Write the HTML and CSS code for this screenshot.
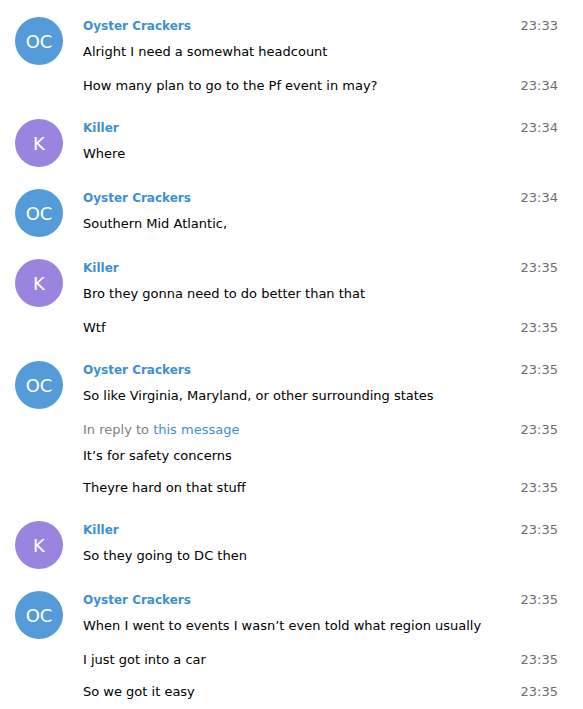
FILE: index.html
```html
<!DOCTYPE html>
<html lang="en">
<head>
    <meta charset="UTF-8">
    <title>Chat</title>
    <link rel="stylesheet" href="styles.css">
</head>
<body>
    <div class="chat">
        <div class="group">
            <div class="avatar oc">OC</div>
            <div class="body">
                <div class="line name-line"><span class="name">Oyster Crackers</span><span class="time">23:33</span></div>
                <div class="line msg"><span class="text">Alright I need a somewhat headcount</span></div>
                <div class="line msg"><span class="text">How many plan to go to the Pf event in may?</span><span class="time">23:34</span></div>
            </div>
        </div>

        <div class="group">
            <div class="avatar k">K</div>
            <div class="body">
                <div class="line name-line"><span class="name">Killer</span><span class="time">23:34</span></div>
                <div class="line msg"><span class="text">Where</span></div>
            </div>
        </div>

        <div class="group">
            <div class="avatar oc">OC</div>
            <div class="body">
                <div class="line name-line"><span class="name">Oyster Crackers</span><span class="time">23:34</span></div>
                <div class="line msg"><span class="text">Southern Mid Atlantic,</span></div>
            </div>
        </div>

        <div class="group">
            <div class="avatar k">K</div>
            <div class="body">
                <div class="line name-line"><span class="name">Killer</span><span class="time">23:35</span></div>
                <div class="line msg"><span class="text">Bro they gonna need to do better than that</span></div>
                <div class="line msg"><span class="text">Wtf</span><span class="time">23:35</span></div>
            </div>
        </div>

        <div class="group">
            <div class="avatar oc">OC</div>
            <div class="body">
                <div class="line name-line"><span class="name">Oyster Crackers</span><span class="time">23:35</span></div>
                <div class="line msg"><span class="text">So like Virginia, Maryland, or other surrounding states</span></div>
                <div class="msg reply-msg">
                    <div class="line reply"><span class="text">In reply to <a href="#">this message</a></span><span class="time">23:35</span></div>
                    <div class="line"><span class="text">It’s for safety concerns</span></div>
                </div>
                <div class="line msg"><span class="text">Theyre hard on that stuff</span><span class="time">23:35</span></div>
            </div>
        </div>

        <div class="group">
            <div class="avatar k">K</div>
            <div class="body">
                <div class="line name-line"><span class="name">Killer</span><span class="time">23:35</span></div>
                <div class="line msg"><span class="text">So they going to DC then</span></div>
            </div>
        </div>

        <div class="group">
            <div class="avatar oc">OC</div>
            <div class="body">
                <div class="line name-line"><span class="name">Oyster Crackers</span><span class="time">23:35</span></div>
                <div class="line msg"><span class="text">When I went to events I wasn’t even told what region usually</span></div>
                <div class="line msg"><span class="text">I just got into a car</span><span class="time">23:35</span></div>
                <div class="line msg last"><span class="text">So we got it easy</span><span class="time">23:35</span></div>
            </div>
        </div>
    </div>
</body>
</html>
```

FILE: styles.css
```css
body {
    margin: 0;
    padding: 0;
    background-color: #fff;
    font-family: "DejaVu Sans", Verdana, sans-serif;
    font-size: 13px;
    color: #000;
}

.chat {
    padding: 1px 25px 0 15px;
}

.group {
    display: flex;
    padding-top: 16px;
}

.avatar {
    width: 48px;
    height: 48px;
    border-radius: 50%;
    flex-shrink: 0;
    margin-right: 20px;
    margin-bottom: 6px;
    display: flex;
    align-items: center;
    justify-content: center;
    color: #fff;
    font-size: 18px;
}

.avatar.oc {
    background-color: #539bd9;
}

.avatar.k {
    background-color: #9b84e0;
}

.body {
    flex: 1;
}

.line {
    display: flex;
    justify-content: space-between;
    line-height: 18px;
}

.msg {
    padding: 8px 0;
}

.msg.last {
    padding-top: 6px;
}

.reply-msg {
    padding-bottom: 6px;
}

.name {
    color: #3d8fd4;
    font-weight: bold;
    font-size: 12px;
}

.time {
    color: #6e6e6e;
}

.reply {
    color: #808080;
    margin-bottom: 8px;
}

.reply a {
    color: #3d8fd4;
    text-decoration: none;
}
```
